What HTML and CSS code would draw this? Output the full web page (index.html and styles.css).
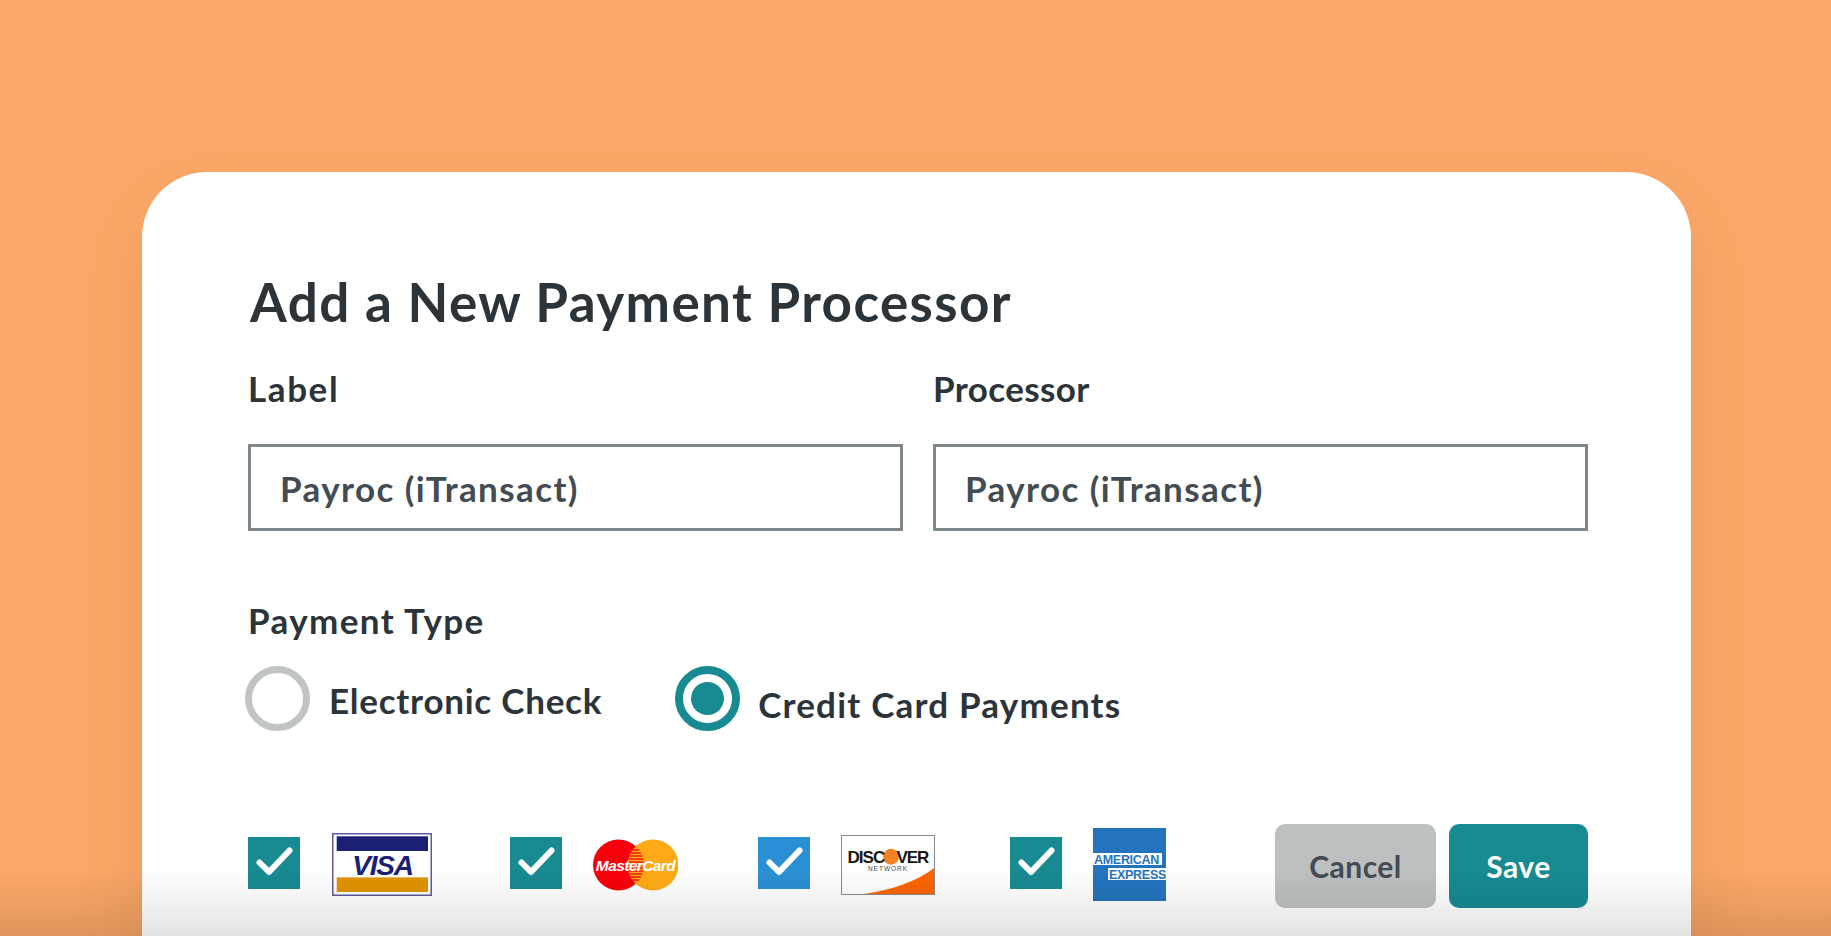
FILE: index.html
```html
<!DOCTYPE html>
<html lang="en">
	<head>
		<meta charset="UTF-8" />
		<title>Add a New Payment Processor</title>
		<link rel="stylesheet" href="styles.css">
	</head>
	<body>
		<div class="card">
			<h1 class="heading">Add a New Payment Processor</h1>

			<div class="fields">
				<div class="field">
					<div class="field-label label-wide">Label</div>
					<div class="field-input">Payroc (iTransact)</div>
				</div>
				<div class="field">
					<div class="field-label label-tight">Processor</div>
					<div class="field-input">Payroc (iTransact)</div>
				</div>
			</div>

			<div class="field-label type-label">Payment Type</div>
			<div class="radios">
				<div class="radio">
					<span class="radio-mark"></span>
					<span class="radio-text">Electronic Check</span>
				</div>
				<div class="radio radio-on">
					<span class="radio-mark"></span>
					<span class="radio-text">Credit Card Payments</span>
				</div>
			</div>

			<div class="bottom-row">
				<div class="brands">
					<div class="brand brand-visa">
						<span class="check"><svg viewBox="0 0 52 52"><path d="M11.500 25.500L21 35L41.500 13.500" /></svg></span>
						<svg class="logo" width="100" height="63" viewBox="0 0 100 63">
							<rect x="0.750" y="0.750" width="98.500" height="61.500" fill="#fff" stroke="#5c5b9f" stroke-width="1.500" />
							<rect x="4.700" y="3.300" width="91.300" height="14.700" fill="#1c2075" />
							<rect x="4.700" y="44.400" width="91.300" height="14.600" fill="#e09400" />
							<text class="visa-text" x="50.500" y="41.500" text-anchor="middle">VISA</text>
						</svg>
					</div>
					<div class="brand brand-mc">
						<span class="check"><svg viewBox="0 0 52 52"><path d="M11.500 25.500L21 35L41.500 13.500" /></svg></span>
						<svg class="logo" width="85" height="52" viewBox="0 0 85 52">
							<circle cx="25.500" cy="26" r="25.500" fill="#f8000b" />
							<circle cx="60" cy="26" r="25.500" fill="#fdaa16" />
							<path class="mc-lines" d="M39.350 11H46.150M37.500 14H48M36.150 17H49.350M35.250 20H50.250M34.700 23H50.800M34.500 26H51M34.700 29H50.800M35.250 32H50.250M36.150 35H49.350M37.500 38H48M39.350 41H46.150" />
							<text class="mc-text" x="42.500" y="32" text-anchor="middle">MasterCard</text>
						</svg>
					</div>
					<div class="brand brand-discover">
						<span class="check check-blue"><svg viewBox="0 0 52 52"><path d="M11.500 25.500L21 35L41.500 13.500" /></svg></span>
						<svg class="logo" width="94" height="60" viewBox="0 0 94 60">
							<rect x="0.500" y="0.500" width="93" height="59" fill="#fff" stroke="#8a8a8a" />
							<path d="M23 59C50 55 75 47 93 33V59Z" fill="#fb6500" />
							<circle cx="50" cy="21.700" r="8" fill="#f58220" />
							<text class="discover-text" x="47" y="28" text-anchor="middle">DISC<tspan fill="none">O</tspan>VER</text>
							<text class="discover-sub" x="47" y="35.700" text-anchor="middle">NETWORK</text>
						</svg>
					</div>
					<div class="brand brand-amex">
						<span class="check"><svg viewBox="0 0 52 52"><path d="M11.500 25.500L21 35L41.500 13.500" /></svg></span>
						<svg class="logo" width="73" height="73" viewBox="0 0 73 73">
							<rect width="73" height="73" fill="#2474bd" />
							<rect x="0" y="25" width="69" height="12" fill="#fff" />
							<rect x="15" y="40" width="58" height="12" fill="#fff" />
							<text class="amex-text" x="1" y="35.500">AMERICAN</text>
							<text class="amex-text" x="16" y="50.500">EXPRESS</text>
						</svg>
					</div>
				</div>
				<div class="actions">
					<button class="btn btn-cancel">Cancel</button>
					<button class="btn btn-save">Save</button>
				</div>
			</div>
		</div>
		<div class="bottom-fade"></div>
	</body>
</html>
```

FILE: styles.css
```css
* {
	margin: 0;
	padding: 0;
	box-sizing: border-box;
}

html,
body {
	height: 100%;
	overflow: hidden;
}

body {
	background: #fca868;
	font-family: 'Lato', 'Liberation Sans', sans-serif;
	position: relative;
}

.card {
	background: #fff;
	border-radius: 65px 65px 0 0;
	box-shadow: 0 30px 70px rgba(120, 70, 30, 0.14);
	width: 1549px;
	height: 800px;
	margin: 172px 0 0 142px;
	padding: 100px 103px 0 106px;
	color: #2c3339;
}

.heading {
	font-size: 53px;
	line-height: 60px;
	font-weight: 700;
	letter-spacing: 1.4px;
	margin-left: 2px;
	margin-bottom: 36px;
}

.fields {
	display: grid;
	grid-template-columns: 655px 655px;
	gap: 30px;
}

.field-label {
	font-size: 35px;
	line-height: 40px;
	font-weight: 700;
	letter-spacing: 1px;
}

.label-wide {
	letter-spacing: 1.600px;
}

.label-tight {
	letter-spacing: 0.400px;
}

.field-input {
	height: 87px;
	margin-top: 36px;
	border: 3px solid #7f898d;
	padding-left: 29px;
	display: flex;
	align-items: center;
	font-size: 35px;
	font-weight: 700;
	letter-spacing: 1.4px;
	color: #434b53;
}

.type-label {
	margin-top: 69px;
	letter-spacing: 1.400px;
}

.radios {
	display: flex;
	gap: 73px;
	margin-top: 26px;
	margin-left: -3px;
}

.radio {
	display: flex;
	align-items: center;
	gap: 19px;
	height: 65px;
}

.radio-mark {
	width: 65px;
	height: 65px;
	border: 7px solid #c0c4c4;
	border-radius: 50%;
	display: flex;
	align-items: center;
	justify-content: center;
}

.radio-text {
	font-size: 35px;
	line-height: 40px;
	font-weight: 700;
	letter-spacing: 0.750px;
	margin-top: 3px;
}

.radio-on {
	gap: 18px;
}

.radio-on .radio-mark {
	border: 8px solid #178a92;
}

.radio-on .radio-mark::after {
	content: '';
	width: 33px;
	height: 33px;
	border-radius: 50%;
	background: #178a92;
}

.radio-on .radio-text {
	margin-top: 11px;
	letter-spacing: 1.200px;
}

.bottom-row {
	display: flex;
	justify-content: space-between;
	align-items: center;
	margin-top: 93px;
}

.brands {
	display: flex;
	align-items: center;
	margin-top: -3px;
}

.brand {
	display: flex;
	align-items: center;
	gap: 31px;
}

.brand-visa {
	gap: 32px;
	margin-right: 78px;
}

.brand-mc {
	margin-right: 80px;
}

.brand-discover {
	margin-right: 75px;
}

.check {
	width: 52px;
	height: 52px;
	background: #178a92;
	display: block;
	margin-top: -3px;
}

.check-blue {
	background: #2b90d3;
}

.check svg {
	display: block;
	fill: none;
	stroke: #fff;
	stroke-width: 6;
	stroke-linecap: round;
	stroke-linejoin: round;
}

.logo {
	display: block;
}

.visa-text {
	font-family: 'Liberation Sans', sans-serif;
	font-size: 28px;
	font-weight: 700;
	font-style: italic;
	fill: #1c2075;
	letter-spacing: -1.200px;
}

.mc-lines {
	stroke: #f21a0b;
	stroke-width: 1.500;
}

.mc-text {
	font-family: 'Liberation Sans', sans-serif;
	font-size: 15.500px;
	font-weight: 700;
	font-style: italic;
	fill: #fff;
	letter-spacing: -0.600px;
}

.discover-text {
	font-family: 'Liberation Sans', sans-serif;
	font-size: 17px;
	font-weight: 700;
	fill: #151515;
	letter-spacing: -1px;
}

.discover-sub {
	font-family: 'Liberation Sans', sans-serif;
	font-size: 6.500px;
	fill: #444;
	letter-spacing: 1px;
}

.amex-text {
	font-family: 'Liberation Sans', sans-serif;
	font-size: 12.500px;
	font-weight: 700;
	fill: #2474bd;
	letter-spacing: -0.300px;
}

.actions {
	display: flex;
	gap: 13px;
}

.btn {
	height: 84px;
	border: none;
	border-radius: 10px;
	font-family: inherit;
	font-size: 30px;
	font-weight: 700;
	letter-spacing: 0.500px;
}

.btn-cancel {
	width: 161px;
	background: #bdc0c1;
	color: #434b53;
}

.btn-save {
	width: 139px;
	background: #178a92;
	color: #fff;
}

/* darkening along the bottom edge, sits over everything */
.bottom-fade {
	position: absolute;
	left: 0;
	right: 0;
	bottom: 0;
	height: 68px;
	background: linear-gradient(rgba(0, 0, 0, 0), rgba(0, 0, 0, 0.11));
	pointer-events: none;
}
```
